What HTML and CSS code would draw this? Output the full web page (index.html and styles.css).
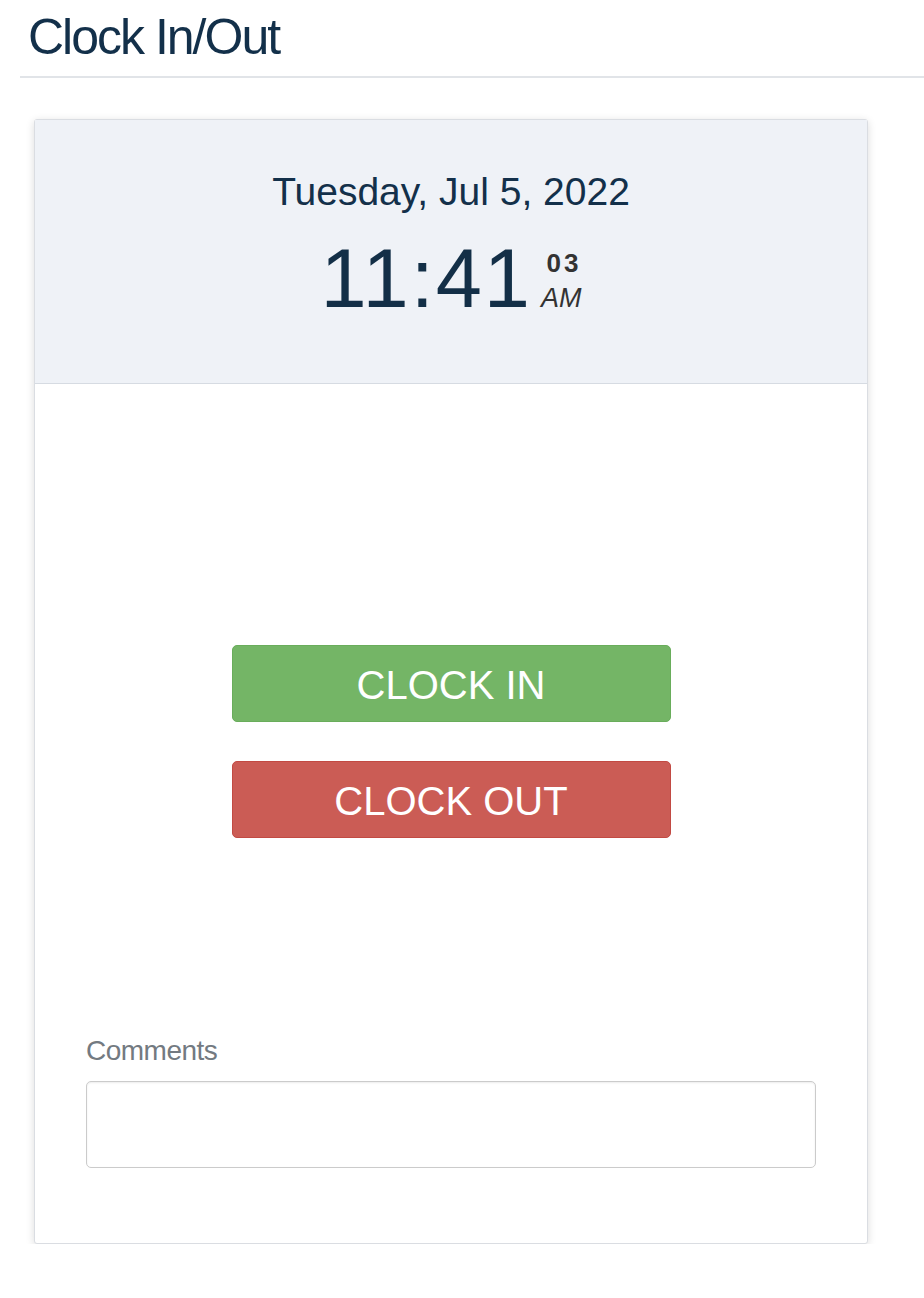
FILE: index.html
```html
<!DOCTYPE html>
<html lang="en">
<head>
	<meta charset="UTF-8">
	<meta name="viewport" content="width=device-width, initial-scale=1.0">
	<title>Clock In/Out</title>
	<link rel="stylesheet" href="styles.css">
</head>
<body>
	<div class="page">
		<h1 class="page-title">Clock In/Out</h1>

		<div class="clock-card">
			<div class="clock-header">
				<div class="clock-date">Tuesday, Jul 5, 2022</div>
				<div class="clock-time">
					<span class="time-main">11:41</span><span class="time-side">
						<span class="time-sec">03</span>
						<span class="time-ampm">AM</span>
					</span>
				</div>
			</div>

			<div class="clock-body">
				<div class="clock-actions">
					<button class="btn btn-in">CLOCK IN</button>
					<button class="btn btn-out">CLOCK OUT</button>
				</div>

				<label class="field-label" for="comments">Comments</label>
				<input class="field-input" id="comments" type="text">
			</div>
		</div>
	</div>
</body>
</html>
```

FILE: styles.css
```css
body {
	margin: 0;
	font-family: "Liberation Sans", Arial, sans-serif;
	color: #13304a;
	background: #fff;
}
.page {
	padding-left: 20px;
}
.page-title {
	margin: 10px 0 0;
	padding: 0 0 11px 8px;
	font-size: 50px;
	line-height: 55px;
	font-weight: normal;
	letter-spacing: -2px;
	color: #13304a;
	border-bottom: 2px solid #e1e4e8;
}
.clock-card {
	width: 832px;
	margin: 41px 0 0 14px;
	border: 1px solid #dadde2;
	border-radius: 3px;
	box-shadow: 0 2px 8px rgba(0, 0, 0, 0.14);
	background: #fff;
}
.clock-header {
	padding: 49px 0 40px;
	text-align: center;
	background: #eff2f7;
	border-bottom: 1px solid #d6dbe2;
}
.clock-date {
	font-size: 39px;
	line-height: 46px;
}
.clock-time {
	margin-top: 23px;
	line-height: 82px;
}
.time-main {
	font-size: 83px;
	letter-spacing: 2px;
	color: #132f47;
}
.time-side {
	display: inline-block;
	margin-left: 9px;
	text-align: right;
	color: #333;
}
.time-sec {
	display: block;
	font-size: 26px;
	line-height: 30px;
	font-weight: bold;
	letter-spacing: 3px;
}
.time-ampm {
	display: block;
	font-size: 27px;
	line-height: 40px;
	font-style: italic;
}
.clock-body {
	padding: 261px 51px 75px;
}
.clock-actions {
	display: flex;
	flex-direction: column;
	align-items: center;
	gap: 39px;
	margin-bottom: 196px;
}
.btn {
	width: 439px;
	height: 77px;
	padding-top: 4px;
	font-family: "Liberation Sans", Arial, sans-serif;
	font-size: 40px;
	color: #fff;
	border-radius: 5px;
	border: 1px solid;
	cursor: pointer;
}
.btn-in {
	background: #74b566;
	border-color: #69ad5b;
}
.btn-out {
	background: #cb5c55;
	border-color: #c24a43;
}
.field-label {
	display: block;
	font-size: 28px;
	line-height: 34px;
	color: #737a81;
	letter-spacing: -0.5px;
	margin-bottom: 13px;
}
.field-input {
	display: block;
	box-sizing: border-box;
	width: 100%;
	height: 87px;
	border: 1px solid #cbcbcb;
	border-radius: 5px;
	box-shadow: inset 0 1px 2px rgba(0, 0, 0, 0.08);
	font-size: 28px;
	padding: 0 12px;
}
```
